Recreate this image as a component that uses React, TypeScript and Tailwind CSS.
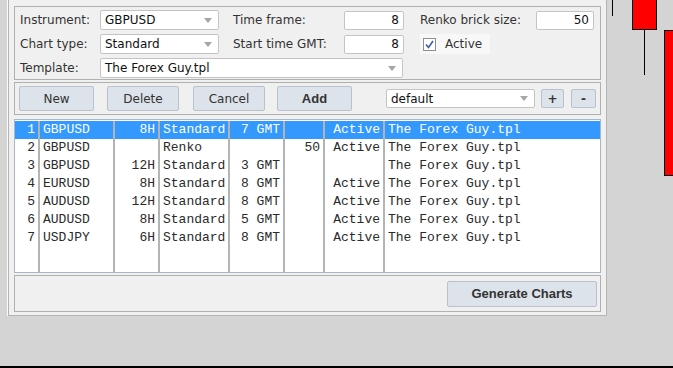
import React from 'react';

const rows = [
  { n: 1, sym: 'GBPUSD', tf: '8H', type: 'Standard', gmt: '7 GMT', renko: '', active: 'Active', tpl: 'The Forex Guy.tpl' },
  { n: 2, sym: 'GBPUSD', tf: '', type: 'Renko', gmt: '', renko: '50', active: 'Active', tpl: 'The Forex Guy.tpl' },
  { n: 3, sym: 'GBPUSD', tf: '12H', type: 'Standard', gmt: '3 GMT', renko: '', active: '', tpl: 'The Forex Guy.tpl' },
  { n: 4, sym: 'EURUSD', tf: '8H', type: 'Standard', gmt: '8 GMT', renko: '', active: 'Active', tpl: 'The Forex Guy.tpl' },
  { n: 5, sym: 'AUDUSD', tf: '12H', type: 'Standard', gmt: '8 GMT', renko: '', active: 'Active', tpl: 'The Forex Guy.tpl' },
  { n: 6, sym: 'AUDUSD', tf: '8H', type: 'Standard', gmt: '5 GMT', renko: '', active: 'Active', tpl: 'The Forex Guy.tpl' },
  { n: 7, sym: 'USDJPY', tf: '6H', type: 'Standard', gmt: '8 GMT', renko: '', active: 'Active', tpl: 'The Forex Guy.tpl' },
];

type Row = (typeof rows)[number];

const columns: { key: keyof Row; w: string; align: 'left' | 'right' }[] = [
  { key: 'n', w: 'w-[25px]', align: 'right' },
  { key: 'sym', w: 'w-[75px]', align: 'left' },
  { key: 'tf', w: 'w-[45px]', align: 'right' },
  { key: 'type', w: 'w-[70px]', align: 'left' },
  { key: 'gmt', w: 'w-[55px]', align: 'right' },
  { key: 'renko', w: 'w-[40px]', align: 'right' },
  { key: 'active', w: 'w-[60px]', align: 'right' },
  { key: 'tpl', w: 'flex-1', align: 'left' },
];

const Caret = () => (
  <svg width="8" height="5" viewBox="0 0 8 5" className="shrink-0">
    <path d="M0 0 L8 0 L4 5 Z" fill="#a6a6a6" />
  </svg>
);

const Combo: React.FC<{ value: string; w: string }> = ({ value, w }) => (
  <div className={`${w} h-[20px] flex items-center justify-between bg-white border border-[#c4c4c4] rounded-[2px] pl-[4px] pr-[6px] text-[12px] text-[#111]`}>
    <span>{value}</span>
    <Caret />
  </div>
);

const NumInput: React.FC<{ value: string; w: string }> = ({ value, w }) => (
  <div className={`${w} h-[19px] flex items-center justify-end bg-white border border-[#c4c4c4] rounded-[2px] pr-[4px] text-[12px] text-[#111]`}>
    {value}
  </div>
);

const Btn: React.FC<{ label: string; w: string; bold?: boolean }> = ({ label, w, bold }) => (
  <button
    className={`${w} h-[25px] bg-[#dde3ea] border border-[#b9c1cc] rounded-[2px] text-[#333] ${
      bold ? "font-bold text-[13px] font-['Liberation_Sans',sans-serif]" : 'text-[12px]'
    }`}
  >
    {label}
  </button>
);

export default function App() {
  return (
    <div className="relative w-[673px] h-[368px] overflow-hidden bg-[#d4d4d4] flex flex-col font-['DejaVu_Sans',sans-serif]">
      {/* chart candles behind the dialog */}
      <div className="absolute left-[612px] top-0 w-px h-[16px] bg-black" />
      <div className="absolute left-[644px] top-[28px] w-px h-[47px] bg-black" />
      <div className="absolute left-[632px] top-[-2px] w-[25px] h-[32px] bg-[#ff0000] border border-black" />
      <div className="absolute left-[664px] top-[30px] w-[20px] h-[146px] bg-[#ff0000] border border-black" />

      <div className="relative ml-[8px] w-[599px] bg-[#f0f0f0] border-x border-b border-[#b4b4b4] shadow-[-1px_0_0_#fafafa] px-[5px] pt-[6px] pb-[3px] flex flex-col">
        {/* settings panel */}
        <div className="h-[74px] border border-[#b0b0b0] bg-[#f0f0f0] pl-[5px] pt-[3px] flex flex-col gap-[4px] text-[12px] text-[#333]">
          <div className="flex items-center h-[20px]">
            <span className="w-[80px]">Instrument:</span>
            <Combo value="GBPUSD" w="w-[119px]" />
            <span className="ml-[14px] w-[111px]">Time frame:</span>
            <NumInput value="8" w="w-[60px]" />
            <span className="ml-[16px] w-[116px]">Renko brick size:</span>
            <NumInput value="50" w="w-[58px]" />
          </div>
          <div className="flex items-center h-[20px]">
            <span className="w-[80px]">Chart type:</span>
            <Combo value="Standard" w="w-[119px]" />
            <span className="ml-[14px] w-[111px]">Start time GMT:</span>
            <NumInput value="8" w="w-[60px]" />
            <div className="ml-[16px] h-[20px] w-[70px] flex items-center gap-[9px] pl-[3px] bg-[#f8f8f8]">
              <div className="w-[13px] h-[13px] bg-white border border-[#8e8f8f] flex items-center justify-center">
                <svg width="9" height="9" viewBox="0 0 9 9">
                  <path d="M1 4.5 L3.5 7.5 L8 1" fill="none" stroke="#3b5bae" strokeWidth="1.6" />
                </svg>
              </div>
              <span>Active</span>
            </div>
          </div>
          <div className="flex items-center h-[20px]">
            <span className="w-[80px]">Template:</span>
            <Combo value="The Forex Guy.tpl" w="w-[303px]" />
          </div>
        </div>

        {/* action bar */}
        <div className="mt-[2px] h-[33px] border border-[#b0b0b0] flex items-center pl-[4px]">
          <Btn label="New" w="w-[75px]" />
          <div className="ml-[13px]"><Btn label="Delete" w="w-[72px]" /></div>
          <div className="ml-[14px]"><Btn label="Cancel" w="w-[72px]" /></div>
          <div className="ml-[12px]"><Btn label="Add" w="w-[75px]" bold /></div>
          <div className="ml-[34px] w-[149px] h-[19px] flex items-center justify-between bg-white border border-[#c4c4c4] rounded-[2px] pl-[4px] pr-[6px] text-[12px] text-[#111]">
            <span>default</span>
            <Caret />
          </div>
          <button className="ml-[6px] w-[23px] h-[19px] bg-[#dde3ea] border border-[#b9c1cc] rounded-[2px] text-[12px] font-bold leading-none text-[#333]">+</button>
          <button className="ml-[7px] w-[25px] h-[19px] bg-[#dde3ea] border border-[#b9c1cc] rounded-[2px] text-[12px] font-bold leading-none text-[#333]">-</button>
        </div>

        {/* list */}
        <div className="mt-[4px] h-[154px] border border-[#a9b6c4] bg-white flex pt-px font-['Liberation_Mono',monospace] text-[13px] text-[#2a2a2a]">
          {columns.map((c, ci) => (
            <div
              key={c.key}
              className={`${c.w} flex flex-col ${ci < columns.length - 1 ? 'border-r-2 border-[#b4b4b4]' : ''}`}
            >
              {rows.map((r, ri) => (
                <div
                  key={r.n}
                  className={`h-[18px] leading-[18px] whitespace-nowrap px-[3px] ${
                    c.align === 'right' ? 'text-right' : 'text-left'
                  } ${ri === 0 ? 'bg-[#3399ff] text-white' : ''}`}
                >
                  {String(r[c.key])}
                </div>
              ))}
            </div>
          ))}
        </div>

        {/* footer */}
        <div className="mt-[2px] h-[37px] border border-[#b0b0b0] flex justify-end items-start pt-[5px] pr-[3px]">
          <button className="w-[150px] h-[26px] bg-[#dde3ea] border border-[#b9c1cc] rounded-[2px] font-['Liberation_Sans',sans-serif] font-bold text-[13px] text-[#333]">
            Generate Charts
          </button>
        </div>
      </div>

      <div className="flex-1" />
      <div className="h-[2px] bg-black" />
    </div>
  );
}
